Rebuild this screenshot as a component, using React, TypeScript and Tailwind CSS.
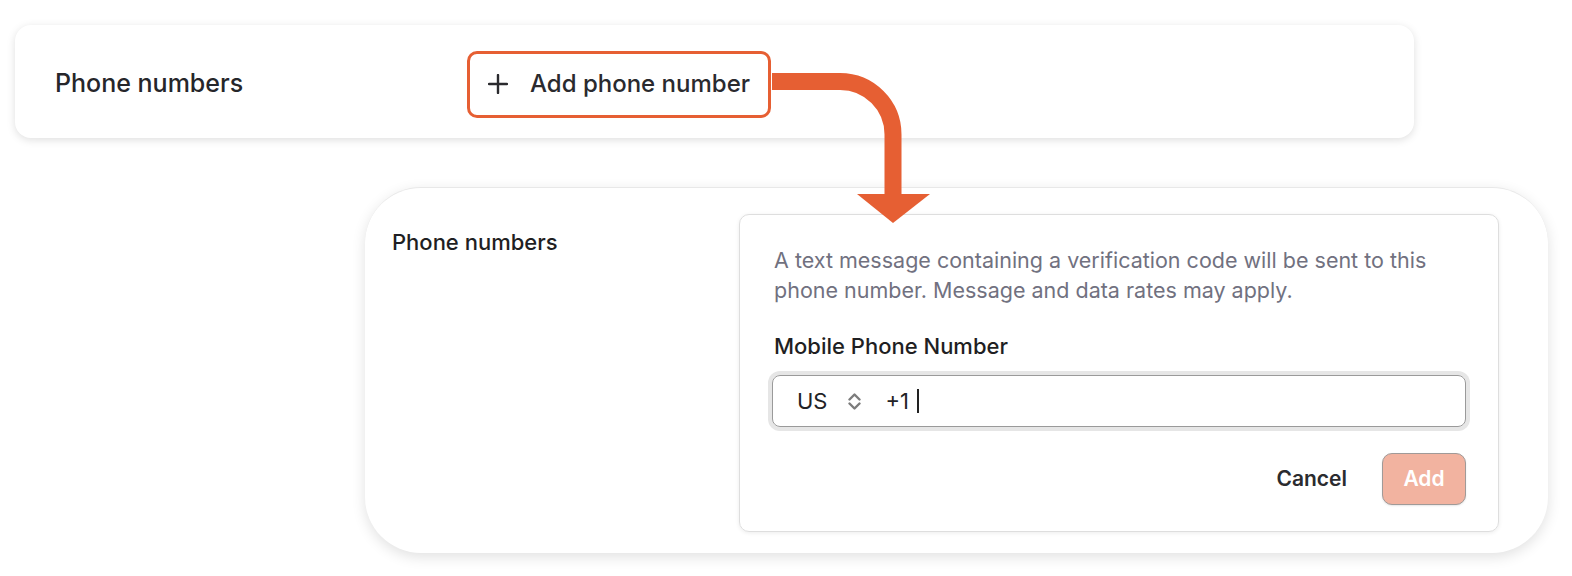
import React from "react";

function PlusIcon() {
  return (
    <svg width="20" height="20" viewBox="0 0 20 20" fill="none">
      <path d="M10 1v18M1 10h18" stroke="#2a2a2e" strokeWidth="2.4" strokeLinecap="round" />
    </svg>
  );
}

function UpDownIcon() {
  return (
    <svg width="13" height="19" viewBox="0 0 13 19" fill="none">
      <path d="M1.5 7.5L6.5 2.5L11.5 7.5M1.5 11.5L6.5 16.5L11.5 11.5" stroke="#7c7c7c" strokeWidth="2.4" strokeLinecap="round" strokeLinejoin="round" />
    </svg>
  );
}

function Arrow() {
  return (
    <svg className="absolute left-0 top-0 pointer-events-none" width="1572" height="576" viewBox="0 0 1572 576" fill="none">
      <path d="M772 81.5H840A53 53 0 0 1 893 134.5V196" stroke="#e65f33" strokeWidth="17" />
      <polygon points="857,194 930,194 893,223" fill="#e65f33" />
    </svg>
  );
}

export default function App() {
  return (
    <main className="relative w-[1572px] h-[576px] bg-white font-['Inter',sans-serif] overflow-hidden">
      <div className="pt-[25px] pl-[15px]">
        <section className="w-[1399px] h-[113px] bg-white rounded-[16px] shadow-[0_2px_8px_rgba(0,0,0,0.13)] flex items-center pl-[40px] pt-[5px]">
          <h2 className="w-[412px] text-[25px] font-medium text-[#26262a]">Phone numbers</h2>
          <div className="w-[304px] h-[67px] border-[3px] border-[#e65f33] rounded-[10px] flex items-center pl-[18px] gap-[22px]">
            <PlusIcon />
            <span className="text-[24px] font-medium text-[#2a2a2e]">Add phone number</span>
          </div>
        </section>
      </div>

      <div className="pl-[365px] pt-[49px]">
        <section className="w-[1183px] h-[366px] bg-white rounded-[56px] border-t border-[#e8e8e8] shadow-[0_4px_14px_rgba(0,0,0,0.12)] flex pl-[27px] pt-[26px]">
          <h3 className="w-[347px] mt-[14px] text-[22px] leading-[28px] font-medium text-[#1f1f23]">Phone numbers</h3>
          <div className="w-[760px] h-[318px] border border-[#dedede] rounded-[10px] shadow-[0_1px_4px_rgba(0,0,0,0.08)] pl-[34px] pr-[32px] pt-[30px]">
            <p className="text-[21.5px] leading-[30px] text-[#71717f]">
              A text message containing a verification code will be sent to this phone number. Message and data rates may apply.
            </p>
            <label className="block mt-[27px] text-[22px] leading-[28px] font-medium text-[#1f1f23]">Mobile Phone Number</label>
            <div className="mt-[15px] -ml-[2px] h-[52px] w-[694px] rounded-[8px] border-[1.5px] border-[#9a9a9a] ring-4 ring-[#e6e6e6] flex items-center pl-[24px] text-[22px] text-[#222226]">
              <span>US</span>
              <span className="ml-[20px] flex items-center"><UpDownIcon /></span>
              <span className="ml-[25px]">+1</span>
              <span className="ml-[8px] w-[2px] h-[24px] bg-[#222]" />
            </div>
            <div className="mt-[26px] flex items-center justify-end gap-[35px]">
              <button className="text-[21px] font-semibold text-[#2b2b2f]">Cancel</button>
              <button className="w-[84px] h-[52px] rounded-[10px] bg-[#f2b3a0] border-[1.5px] border-[#a09a98] text-white text-[21px] font-semibold shadow-[0_1px_2px_rgba(0,0,0,0.1)]">Add</button>
            </div>
          </div>
        </section>
      </div>

      <Arrow />
    </main>
  );
}
